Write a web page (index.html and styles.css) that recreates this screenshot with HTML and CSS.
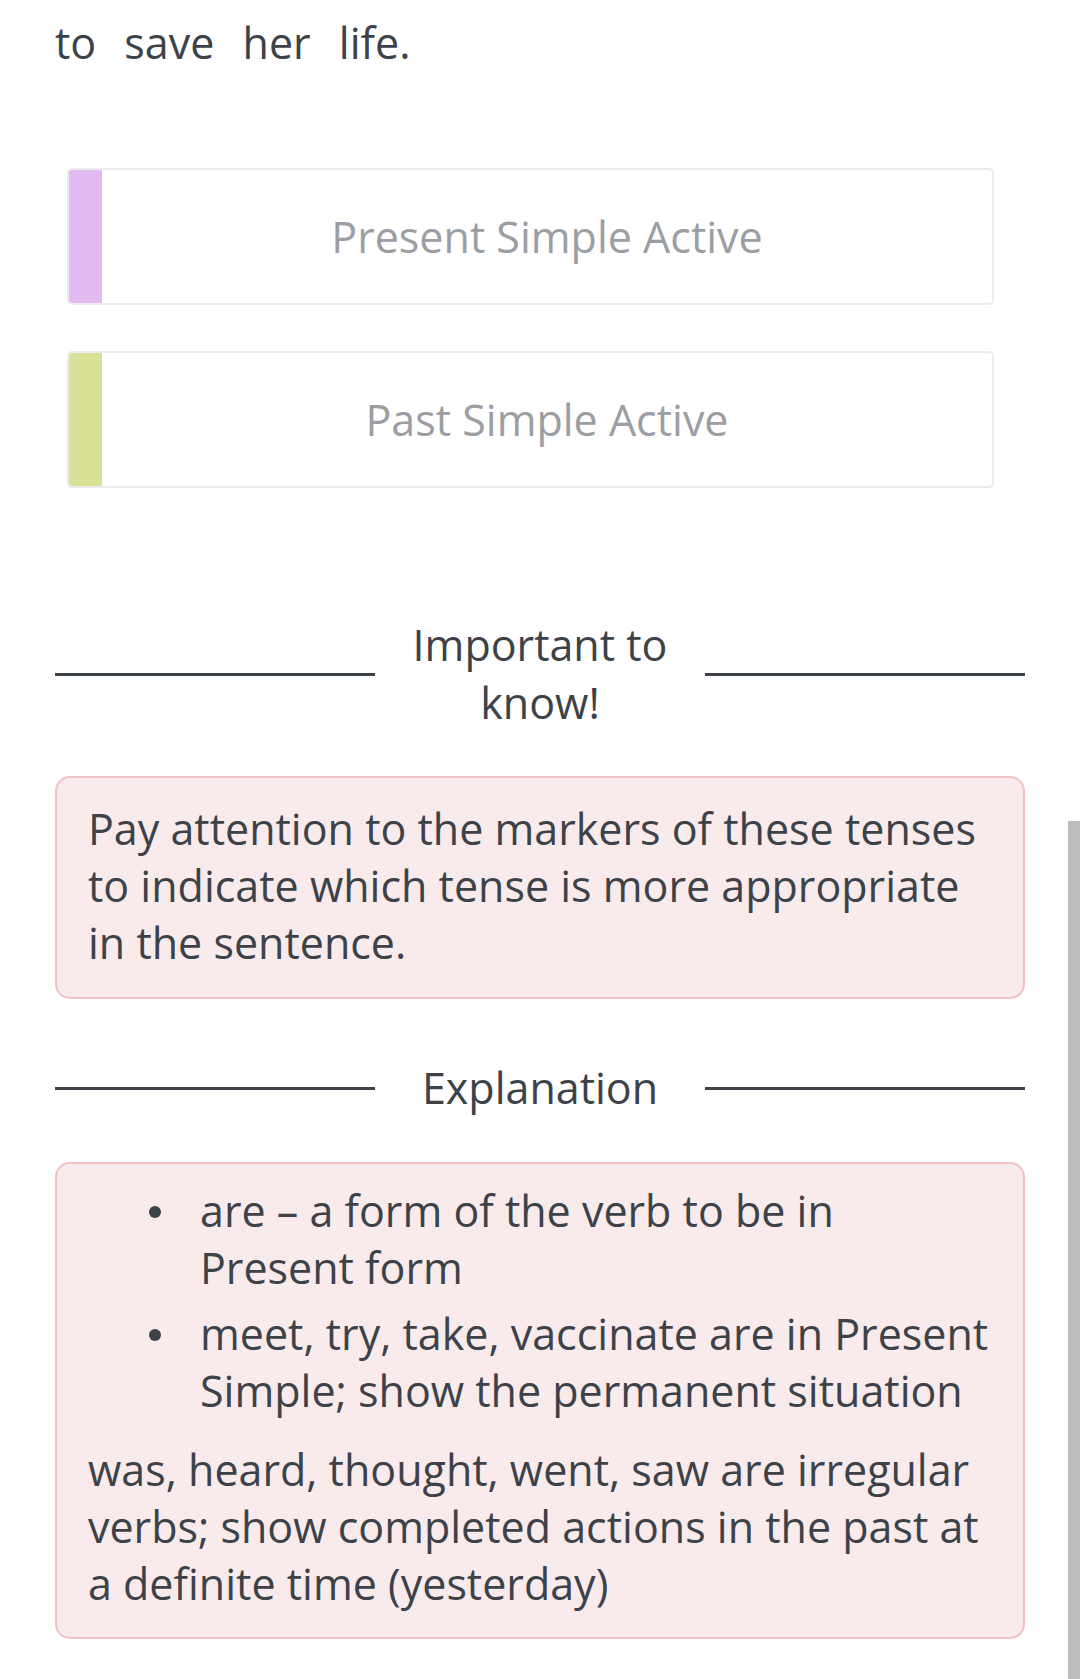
FILE: index.html
```html
<!DOCTYPE html>
<html lang="en">
<head>
<meta charset="utf-8">
<title>Tenses</title>
<link rel="stylesheet" href="styles.css">
</head>
<body>
<div class="page">
  <p class="sentence">to save her life.</p>

  <div class="cards">
    <div class="card card-pink"><span class="card-bar"></span><span class="card-text">Present Simple Active</span></div>
    <div class="card card-green"><span class="card-bar"></span><span class="card-text">Past Simple Active</span></div>
  </div>

  <div class="divider divider-important">
    <span class="divider-line"></span>
    <span class="divider-text">Important to know!</span>
    <span class="divider-line"></span>
  </div>

  <div class="note note-important">
    <p>Pay attention to the markers of these tenses to indicate which tense is more appropriate in the sentence.</p>
  </div>

  <div class="divider divider-explanation">
    <span class="divider-line"></span>
    <span class="divider-text">Explanation</span>
    <span class="divider-line"></span>
  </div>

  <div class="note note-explanation">
    <ul class="bullets">
      <li>are – a form of the verb to be in Present form</li>
      <li>meet, try, take, vaccinate are in Present Simple; show the permanent situation</li>
    </ul>
    <p>was, heard, thought, went, saw are irregular verbs; show completed actions in the past at a definite time (yesterday)</p>
  </div>
</div>
<div class="scrollbar"></div>
</body>
</html>
```

FILE: styles.css
```css
html, body {
  margin: 0;
  padding: 0;
  background: #ffffff;
}

body {
  position: relative;
  min-height: 1679px;
  font-family: "Open Sans", "Noto Sans", sans-serif;
  font-size: 43px;
  line-height: 57px;
  color: #3d4249;
  overflow: hidden;
}

.page {
  padding: 14px 55px 0 55px;
}

p {
  margin: 0;
}

.sentence {
  word-spacing: 17px;
}

.cards {
  display: flex;
  flex-direction: column;
  gap: 46px;
  margin: 97px 31px 0 12px;
}

.card {
  box-sizing: border-box;
  display: flex;
  height: 137px;
  border: 2px solid #ececec;
  border-radius: 5px;
  background: #ffffff;
  overflow: hidden;
}

.card-bar {
  width: 35px;
  flex: none;
  margin: -2px 0 -2px -2px;
  border-radius: 5px 0 0 5px;
}

.card-pink .card-bar {
  background: #e2bbf0;
}

.card-green .card-bar {
  background: #d9e199;
}

.card-text {
  flex: 1;
  display: flex;
  align-items: center;
  justify-content: center;
  color: #9b9ea3;
}

.divider {
  display: grid;
  grid-template-columns: 320px 1fr 320px;
  align-items: center;
}

.divider-line {
  height: 3px;
  background: #3d4249;
}

.divider-text {
  text-align: center;
  line-height: 58px;
}

.divider-important {
  margin-top: 128px;
}

.divider-explanation {
  margin-top: 60px;
}

.note {
  border: 2px solid #f1c1c3;
  border-radius: 15px;
  background: #f9ebec;
  padding: 18px 31px 25px 31px;
}

.note-important {
  margin-top: 44px;
  padding-top: 22px;
  padding-bottom: 26px;
}

.note-explanation {
  margin-top: 45px;
}

.bullets {
  list-style: none;
  margin: 0 0 22px 0;
  padding: 0;
}

.bullets li {
  display: flex;
  padding-left: 61px;
}

.bullets li + li {
  margin-top: 9px;
}

.bullets li::before {
  content: "";
  flex: none;
  width: 12px;
  height: 12px;
  margin-top: 24px;
  margin-right: 39px;
  border-radius: 50%;
  background: #3d4249;
}

.scrollbar {
  position: absolute;
  top: 821px;
  right: 0;
  bottom: 0;
  width: 12px;
  background: #bdbdbd;
}
```
